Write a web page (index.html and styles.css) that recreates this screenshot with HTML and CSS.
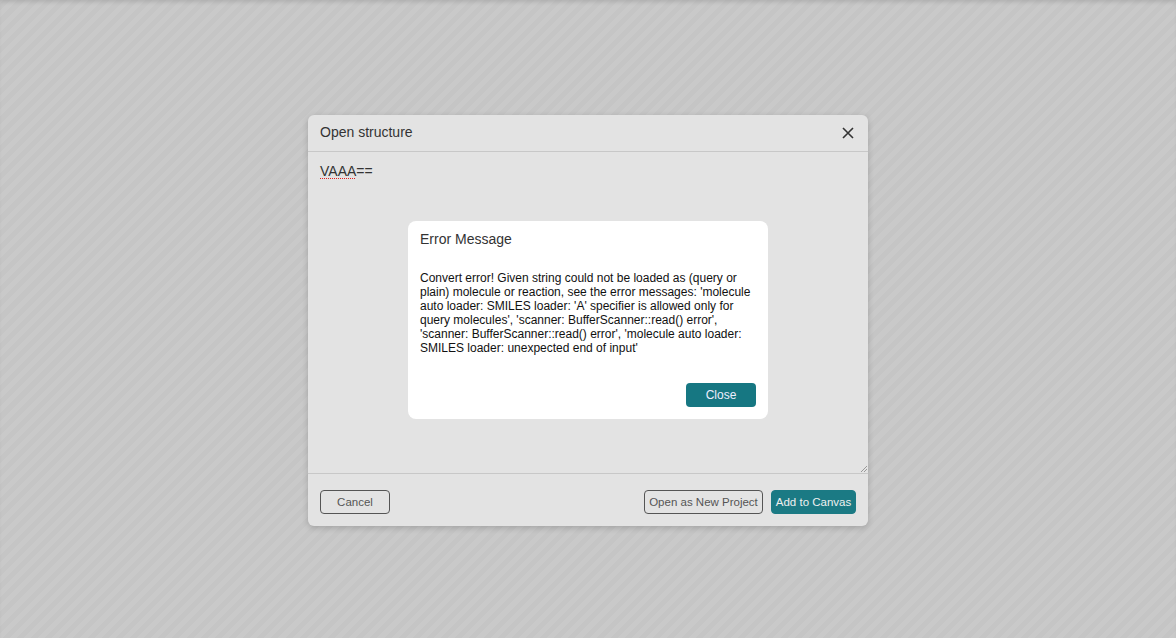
FILE: index.html
```html
<!DOCTYPE html>
<html>
<head>
<meta charset="utf-8">
<link rel="stylesheet" href="styles.css">
</head>
<body>
<div class="overlay">
  <div class="modal">
    <div class="modal-header">
      <span class="title">Open structure</span>
      <svg class="close-x" width="14" height="14" viewBox="0 0 14 14"><path d="M2 2L12 12M12 2L2 12" stroke="#333" stroke-width="1.6" fill="none"/></svg>
    </div>
    <div class="modal-body">
      <div class="textarea"><span class="spell">VAAA</span>==</div>
      <svg class="grip" width="6" height="6" viewBox="0 0 6 6"><path d="M6 0L0 6M6 3L3 6" stroke="#999" stroke-width="1"/></svg>
    </div>
    <div class="modal-footer">
      <button class="btn btn-outline cancel">Cancel</button>
      <div class="spacer"></div>
      <button class="btn btn-outline open">Open as New Project</button>
      <button class="btn btn-primary">Add to Canvas</button>
    </div>
  </div>
  <div class="error">
    <div class="error-title">Error Message</div>
    <div class="error-text">Convert error! Given string could not be loaded as (query or plain) molecule or reaction, see the error messages: 'molecule auto loader: SMILES loader: 'A' specifier is allowed only for query molecules', 'scanner: BufferScanner::read() error', 'scanner: BufferScanner::read() error', 'molecule auto loader: SMILES loader: unexpected end of input'</div>
    <div class="error-footer"><button class="btn-close">Close</button></div>
  </div>
</div>
</body>
</html>
```

FILE: styles.css
```css
html, body {
  margin: 0;
  padding: 0;
  width: 1176px;
  height: 638px;
  overflow: hidden;
}
body {
  font-family: "Liberation Sans", Arial, sans-serif;
  background: repeating-linear-gradient(-45deg, #c9c9c9 0px, #c9c9c9 5px, #c5c5c5 5px, #c5c5c5 10px);
}
.overlay {
  position: relative;
  width: 1176px;
  height: 638px;
  box-shadow: inset 0 4px 4px -2px rgba(0,0,0,0.12);
  display: flex;
  justify-content: center;
  padding-top: 115px;
  box-sizing: border-box;
}
.modal {
  width: 560px;
  height: 411px;
  background: #e3e3e3;
  border-radius: 6px;
  box-shadow: 0 2px 6px rgba(0,0,0,0.18);
  display: flex;
  flex-direction: column;
}
.modal-header {
  height: 36px;
  border-bottom: 1px solid #c8c8c8;
  display: flex;
  align-items: center;
  justify-content: space-between;
  padding: 0 12px 2px;
  box-sizing: border-box;
  height: 37px;
  flex-shrink: 0;
}
.title {
  font-size: 14px;
  color: #333;
}
.close-x { margin-right: 1px; margin-top: 2px; }
.modal-body {
  position: relative;
  height: 321px;
  border-bottom: 1px solid #c8c8c8;
  flex-shrink: 0;
}
.textarea {
  padding: 11px 12px;
  font-size: 14px;
  color: #333;
}
.spell {
  text-decoration: underline dotted #e02020;
  text-decoration-thickness: 1px;
  text-underline-offset: 2px;
}
.grip {
  position: absolute;
  right: 1px;
  bottom: 1px;
}
.modal-footer {
  flex: 1;
  display: flex;
  align-items: center;
  padding: 4px 12px 0;
  gap: 8px;
}
.spacer { flex: 1; }
.btn {
  height: 24px;
  font-family: "Liberation Sans", Arial, sans-serif;
  font-size: 11.5px;
  border-radius: 4px;
  padding: 0;
  box-sizing: border-box;
  white-space: nowrap;
  cursor: pointer;
}
.btn-outline {
  background: transparent;
  border: 1px solid #555;
  color: #555;
}
.cancel { width: 70px; }
.open { width: 119px; }
.btn-primary {
  background: #1b7a84;
  border: 1px solid #1b7a84;
  color: #f0f0f0;
  width: 85px;
}
.error {
  position: absolute;
  left: 408px;
  top: 221px;
  width: 360px;
  height: 198px;
  background: #fff;
  border-radius: 8px;
  box-sizing: border-box;
  padding: 0 12px;
  display: flex;
  flex-direction: column;
}
.error-title {
  font-size: 14px;
  color: #333;
  margin-top: 10px;
  height: 17px;
}
.error-text {
  margin-top: 23px;
  font-size: 12px;
  line-height: 14px;
  color: #111;
}
.error-footer {
  margin-top: auto;
  margin-bottom: 12px;
  display: flex;
  justify-content: flex-end;
}
.btn-close {
  width: 70px;
  height: 24px;
  background: #167782;
  color: #eef;
  border: none;
  border-radius: 4px;
  font-family: "Liberation Sans", Arial, sans-serif;
  font-size: 12px;
}
```
